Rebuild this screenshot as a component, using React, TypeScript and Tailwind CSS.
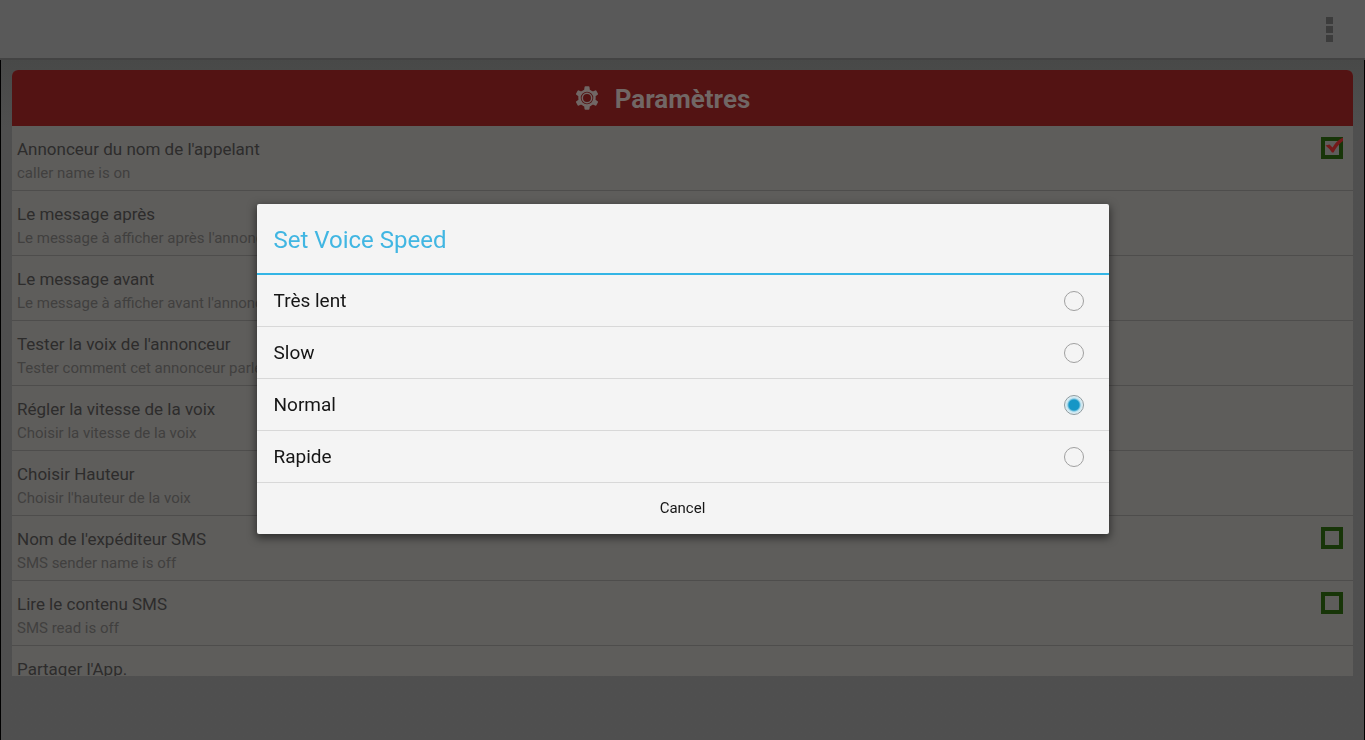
import React, { useState } from "react";

interface Setting {
  id: string;
  title: string;
  summary: string;
  checked?: boolean;
}

const initialSettings: Setting[] = [
  { id: "caller", title: "Annonceur du nom de l'appelant", summary: "caller name is on", checked: true },
  { id: "after", title: "Le message après", summary: "Le message à afficher après l'annonce" },
  { id: "before", title: "Le message avant", summary: "Le message à afficher avant l'annonce" },
  { id: "test", title: "Tester la voix de l'annonceur", summary: "Tester comment cet annonceur parle" },
  { id: "speed", title: "Régler la vitesse de la voix", summary: "Choisir la vitesse de la voix" },
  { id: "pitch", title: "Choisir Hauteur", summary: "Choisir l'hauteur de la voix" },
  { id: "sender", title: "Nom de l'expéditeur SMS", summary: "SMS sender name is off", checked: false },
  { id: "content", title: "Lire le contenu SMS", summary: "SMS read is off", checked: false },
  { id: "share", title: "Partager l'App.", summary: "" },
];

const speeds = ["Très lent", "Slow", "Normal", "Rapide"];

const teeth = [0, 60, 120, 180, 240, 300];

function GearIcon() {
  return (
    <svg width="24" height="24" viewBox="0 0 24 24" fill="none" aria-hidden="true">
      {teeth.map((angle) => (
        <path key={angle} d="M9 5L9.500 1.200Q9.500 .3 10.500 .3H13.500Q14.500 .3 14.500 1.200L15 5z" fill="#716765" transform={`rotate(${angle} 12 12)`} />
      ))}
      <circle cx="12" cy="12" r="7.500" stroke="#716765" strokeWidth="2.500" />
      <circle cx="12" cy="12" r="4.700" stroke="#716765" strokeWidth="1.500" />
    </svg>
  );
}

function SettingRow({ setting, onToggle }: { setting: Setting; onToggle: () => void }) {
  return (
    <li className="flex h-[65px] shrink-0 items-start justify-between border-b border-[#4e4d4c] pr-2.5 pl-[5px]">
      <div className="pt-[11px]">
        <label htmlFor={setting.id} className="block text-[17px] leading-6 text-[#2d2c2c]">
          {setting.title}
        </label>
        <p className="text-[15px] leading-6 text-[#41403f]">{setting.summary}</p>
      </div>
      {setting.checked !== undefined && (
        <span className="relative mt-[11px] size-[22px]">
          <input
            id={setting.id}
            type="checkbox"
            checked={setting.checked}
            onChange={onToggle}
            className="block size-[22px] appearance-none border-4 border-[#173508]"
          />
          {setting.checked && (
            <svg className="pointer-events-none absolute inset-0" width="22" height="22" viewBox="0 0 22 22" aria-hidden="true">
              <path d="M4.500 8.500L8.500 7.500L11.500 10.500Q15.500 3.500 22 .5V4Q16 8.500 12.500 15.500H11Q8.500 11.500 4.500 8.500z" fill="#731a1a" />
            </svg>
          )}
        </span>
      )}
    </li>
  );
}

function SpeedDialog() {
  const [speed, setSpeed] = useState("Normal");

  return (
    <div
      role="dialog"
      aria-modal="true"
      aria-labelledby="dialog-title"
      className="w-full max-w-[852px] rounded-xs bg-[#f4f4f4] shadow-[0_3px_8px_1px_rgba(0,0,0,0.5)]"
    >
      <h2
        id="dialog-title"
        className="border-b-2 border-[#33b5e5] px-[17px] pt-5 pb-[17px] text-[24px] leading-8 text-[#41b6e2]"
      >
        Set Voice Speed
      </h2>
      {speeds.map((name) => (
        <label
          key={name}
          className="flex h-[52px] items-center justify-between border-b border-[#d8d8d8] pr-[25px] pl-[17px] text-[19px] text-[#161616]"
        >
          <span className="pt-0.5">{name}</span>
          <input
            type="radio"
            name="speed"
            checked={speed === name}
            onChange={() => setSpeed(name)}
            className="size-5 appearance-none rounded-full border border-[#a0a0a0] checked:border-[#8f9ba0] checked:bg-[radial-gradient(circle,#1696c6_5px,#c4e5f1_7px,#e4eff3_9px)]"
          />
        </label>
      ))}
      <button type="button" className="block h-[51px] w-full text-[15px] text-[#161616]">
        Cancel
      </button>
    </div>
  );
}

export default function App() {
  const [settings, setSettings] = useState(initialSettings);

  const toggle = (id: string) =>
    setSettings(settings.map((s) => (s.id === id ? { ...s, checked: !s.checked } : s)));

  return (
    <div className="flex h-screen flex-col overflow-hidden bg-[#4e4e4e] font-[Roboto,sans-serif]">
      {/* Action bar */}
      <header className="flex h-[60px] shrink-0 items-center justify-end border-b-2 border-[#434343] bg-[#595959] pr-6">
        <button type="button" aria-label="More options" className="flex w-6 flex-col items-center gap-0.5 py-2">
          <span className="size-[7px] bg-[#3c3c3c]" />
          <span className="size-[7px] bg-[#3c3c3c]" />
          <span className="size-[7px] bg-[#3c3c3c]" />
        </button>
      </header>

      {/* Settings list */}
      <main className="flex min-h-0 flex-1 flex-col border-x border-black bg-linear-to-b from-[#484948] to-[#4f4f4f] to-10% px-[11px] pt-2.5 pb-16">
        <section className="flex min-h-0 flex-1 flex-col overflow-hidden rounded-t-md bg-[#5e5d5b]">
          <h1 className="flex h-14 shrink-0 items-center justify-center gap-4 bg-[#531313] pr-10 text-[26px] font-bold text-[#716765]">
            <GearIcon />
            <span className="pt-0.5">Paramètres</span>
          </h1>
          <ul className="flex min-h-0 flex-1 flex-col overflow-hidden">
            {settings.map((s) => (
              <SettingRow key={s.id} setting={s} onToggle={() => toggle(s.id)} />
            ))}
          </ul>
        </section>
      </main>

      {/* Dialog */}
      <div className="fixed inset-0 flex items-center justify-center px-4 pb-0.5">
        <SpeedDialog />
      </div>
    </div>
  );
}
